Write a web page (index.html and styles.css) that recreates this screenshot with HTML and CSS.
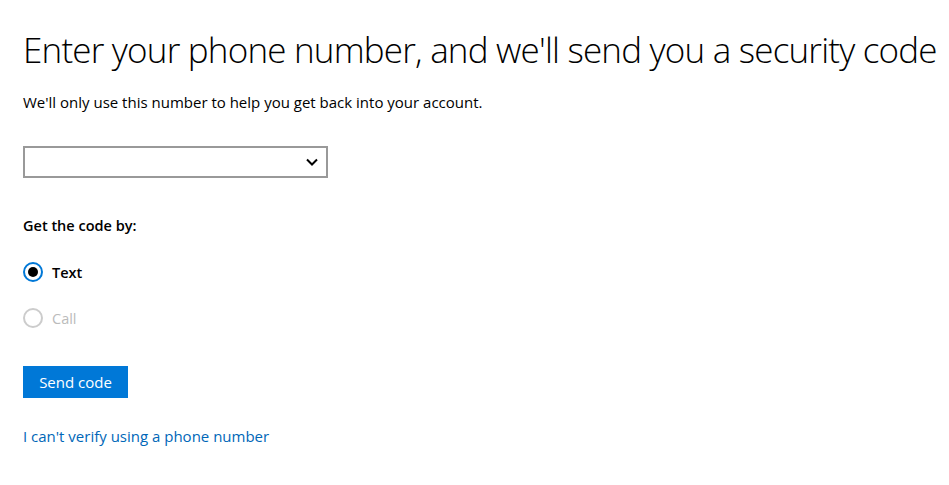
FILE: index.html
```html
<!DOCTYPE html>
<html lang="en">
<head>
    <meta charset="UTF-8">
    <meta name="viewport" content="width=device-width, initial-scale=1.0">
    <title>Security code</title>
    <link rel="stylesheet" href="styles.css">
</head>
<body>
    <div class="page">
        <h1>Enter your phone number, and we'll send you a security code</h1>
        <p class="intro">We'll only use this number to help you get back into your account.</p>

        <div class="select-box">
            <svg class="chevron" width="12" height="8" viewBox="0 0 12 8">
                <path d="M1 1.5 L6 6.5 L11 1.5" fill="none" stroke="#000" stroke-width="2"/>
            </svg>
        </div>

        <p class="group-label">Get the code by:</p>

        <div class="radio-row">
            <span class="radio checked"></span>
            <span class="radio-text">Text</span>
        </div>
        <div class="radio-row disabled">
            <span class="radio"></span>
            <span class="radio-text">Call</span>
        </div>

        <button type="button" class="send-btn">Send code</button>

        <a class="alt-link" href="#">I can't verify using a phone number</a>
    </div>
</body>
</html>
```

FILE: styles.css
```css
body {
    margin: 0;
    font-family: "Open Sans", "Noto Sans", sans-serif;
    color: #000;
    background: #fff;
}
.page {
    padding: 26px 0 0 23px;
}
h1 {
    margin: 0;
    font-size: 35px;
    font-weight: 300;
    line-height: 48px;
    white-space: nowrap;
    letter-spacing: -0.8px;
}
.intro {
    margin: 18px 0 0 0;
    font-size: 15px;
    line-height: 20px;
}
.select-box {
    box-sizing: border-box;
    width: 305px;
    height: 32px;
    margin-top: 34px;
    border: 2px solid #999;
    display: flex;
    align-items: center;
    justify-content: flex-end;
    padding-right: 8px;
}
.group-label {
    margin: 38px 0 0 0;
    font-size: 14.5px;
    font-weight: 600;
    line-height: 20px;
}
.radio-row {
    display: flex;
    align-items: center;
    gap: 9px;
    height: 22px;
    margin-top: 25px;
    font-size: 14.5px;
    font-weight: 600;
}
.radio-row + .radio-row {
    margin-top: 24px;
}
.radio {
    box-sizing: border-box;
    width: 20px;
    height: 20px;
    border: 2px solid #0078d7;
    border-radius: 50%;
    display: flex;
    align-items: center;
    justify-content: center;
}
.radio.checked::after {
    content: "";
    width: 10px;
    height: 10px;
    border-radius: 50%;
    background: #000;
}
.disabled .radio {
    border-color: #ccc;
}
.disabled .radio-text {
    color: #bbb;
    font-weight: 400;
}
.send-btn {
    display: block;
    margin-top: 37px;
    width: 105px;
    height: 32px;
    border: none;
    background: #0078d7;
    color: #fff;
    font-family: inherit;
    font-size: 15px;
    padding: 0;
}
.alt-link {
    display: inline-block;
    margin-top: 28px;
    color: #0067b8;
    text-decoration: none;
    font-size: 15px;
}
```
